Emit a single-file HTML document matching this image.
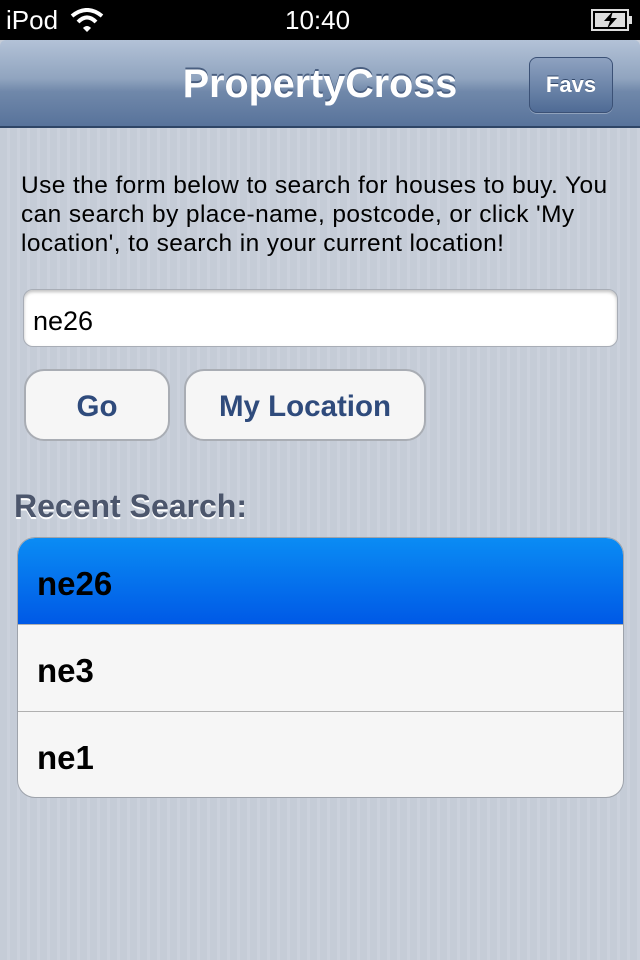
<!DOCTYPE html>
<html><head><style>
*{margin:0;padding:0;box-sizing:border-box}
body{width:640px;height:960px;overflow:hidden;font-family:"Liberation Sans",sans-serif;background:#c8ced9;background-image:repeating-linear-gradient(90deg,#c5ccd7 0,#c5ccd7 7px,#cbd1dc 7px,#cbd1dc 10px);position:relative}
.status{position:absolute;left:0;top:0;width:640px;height:40px;background:#000;color:#fff;font-size:26px}
.nav{position:absolute;left:0;top:40px;width:640px;height:88px;background:linear-gradient(#b3c2d7,#90a4bf 45%,#7088aa 60%,#58739b);border-bottom:2px solid #2f4566;border-radius:6px 6px 0 0}
.nav h1{position:absolute;left:0;width:640px;top:22px;text-align:center;color:#fff;font-size:39.5px;font-weight:bold;text-shadow:0 -2px 0 #4a5f80}
.favs{position:absolute;left:529px;top:17px;width:84px;height:56px;border:1px solid #3b5176;border-radius:8px;background:linear-gradient(#8ea2c0,#4f6b95);color:#fff;font-weight:bold;font-size:22px;text-align:center;line-height:54px;text-shadow:0 -1px 0 #33496b;box-shadow:0 1px 0 rgba(255,255,255,.3)}
.intro{position:absolute;left:21px;top:171px;width:600px;font-size:24.5px;letter-spacing:0.4px;line-height:29px;color:#000}
.input{position:absolute;left:23px;top:289px;width:595px;height:58px;background:#fff;border:1px solid #a8adb6;border-radius:10px;box-shadow:inset 0 2px 3px rgba(0,0,0,.25);font-size:27px;padding:16px 0 0 9px}
.btn{position:absolute;top:369px;height:72px;background:#f6f6f6;border:2px solid #a9adb4;border-radius:20px;color:#2f4b7c;font-weight:bold;font-size:29.5px;text-align:center;line-height:72px}
.rs{position:absolute;left:14px;top:488px;font-size:32px;font-weight:bold;color:#4c566c;text-shadow:0 2px 0 #fff}
.list{position:absolute;left:17px;top:537px;width:607px;height:261px;border:1px solid #9ea3ab;border-radius:18px;overflow:hidden;background:#f6f6f6}
.row{height:87px;border-bottom:1px solid #b0b0b0;font-size:33px;font-weight:bold;padding:27px 0 0 19px}
.row:last-child{border-bottom:0}
.sel{background:linear-gradient(#0a8cf4,#0059e6)}
</style></head><body>
<div class="status">
<span style="position:absolute;left:6px;top:5px">iPod</span>
<svg style="position:absolute;left:70px;top:8px" width="34" height="24" viewBox="0 0 34 24"><path d="M2 8 Q17 -4 32 8" stroke="#fff" stroke-width="4" fill="none"/><path d="M8 14 Q17 5 26 14" stroke="#fff" stroke-width="4" fill="none"/><path d="M13 20 L17 24 L21 20 Q17 16 13 20Z" fill="#fff"/></svg>
<span style="position:absolute;left:285px;top:5px">10:40</span>
<svg style="position:absolute;left:591px;top:9px" width="42" height="22" viewBox="0 0 42 22"><rect x="1" y="1" width="36" height="20" fill="none" stroke="#ddd" stroke-width="2"/><rect x="38" y="7" width="3" height="8" fill="#ddd"/><rect x="4" y="4" width="30" height="14" fill="#ddd"/><path d="M22 2 L13 12 L19 12 L16 20 L26 9 L20 9 Z" fill="#000"/></svg>
</div>
<div class="nav"><h1>PropertyCross</h1><div class="favs">Favs</div></div>
<div class="intro">Use the form below to search for houses to buy. You can search by place-name, postcode, or click 'My location', to search in your current location!</div>
<div class="input">ne26</div>
<div class="btn" style="left:24px;width:146px">Go</div>
<div class="btn" style="left:184px;width:242px">My Location</div>
<div class="rs">Recent Search:</div>
<div class="list"><div class="row sel">ne26</div><div class="row">ne3</div><div class="row">ne1</div></div>
</body></html>
